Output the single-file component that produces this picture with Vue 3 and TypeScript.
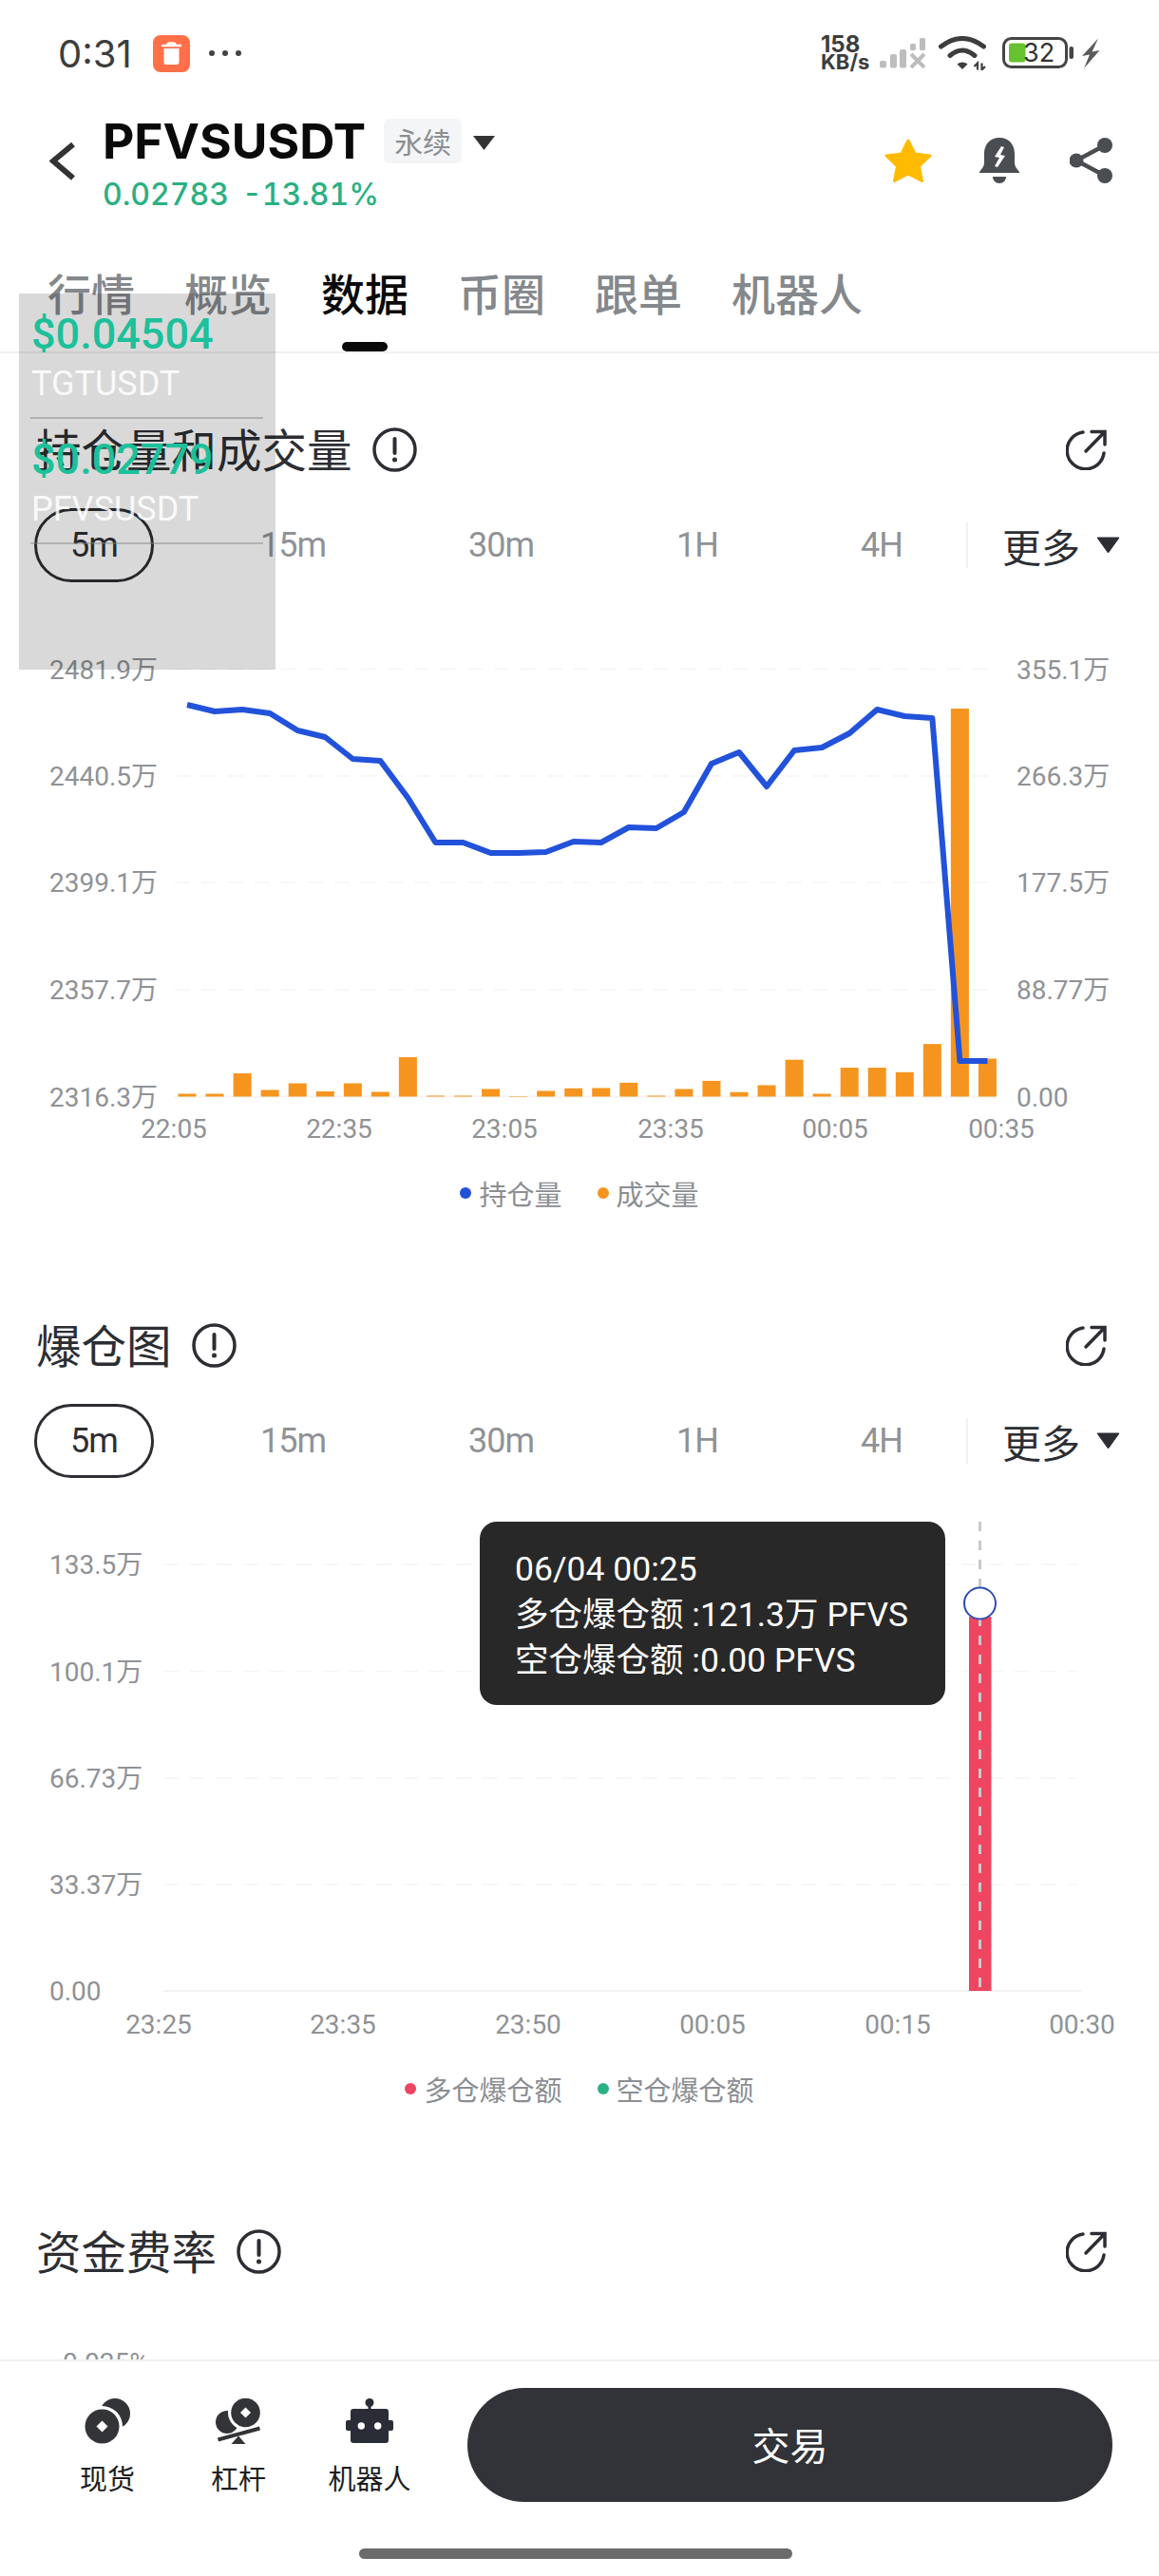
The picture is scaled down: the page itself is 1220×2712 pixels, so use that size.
<script setup lang="ts">
type Legend = { label: string; color: string };

const tabs = ['行情', '概览', '数据', '币圈', '跟单', '机器人'];
const ranges = ['5m', '15m', '30m', '1H', '4H'];
const tickers = [
    { price: '$0.04504', name: 'TGTUSDT' },
    { price: '$0.02779', name: 'PFVSUSDT' },
];

// chart 1: one value per 5 minute bucket, in svg pixels
const barHeights = [3, 3, 24.5, 7, 14, 5.5, 14, 5, 41.5, 1, 1, 8, 0.5, 6, 8.7, 9, 14.6, 1, 8, 16.6, 4.7, 12, 38.8, 3, 30.4, 30.4, 25.7, 55.4, 408.5, 40];
const oiLine = [129, 136, 134, 138, 156, 163, 186, 188, 227, 274, 274, 285, 285, 284, 273, 274, 258, 259, 242, 191, 179, 215, 177, 174, 159, 134, 141, 143, 504, 504];
const barX = (i: number) => 197 + i * 29.05;
const oiPoints = oiLine.map((y, i) => `${barX(i)},${y}`).join(' ');

const grid1 = [91.5, 204, 316, 429];
const base1 = 541.5;
const left1 = ['2481.9万', '2440.5万', '2399.1万', '2357.7万', '2316.3万'];
const right1 = ['355.1万', '266.3万', '177.5万', '88.77万', '0.00'];
const time1 = [
    { t: '22:05', x: 183 }, { t: '22:35', x: 357 }, { t: '23:05', x: 531 },
    { t: '23:35', x: 706 }, { t: '00:05', x: 879 }, { t: '00:35', x: 1054 },
];

const grid2 = [91, 203.5, 316, 428];
const base2 = 540;
const left2 = ['133.5万', '100.1万', '66.73万', '33.37万', '0.00'];
const time2 = [
    { t: '23:25', x: 167 }, { t: '23:35', x: 361 }, { t: '23:50', x: 556 },
    { t: '00:05', x: 750 }, { t: '00:15', x: 945 }, { t: '00:30', x: 1139 },
];

const legend1: Legend[] = [
    { label: '持仓量', color: '#2152d9' },
    { label: '成交量', color: '#f5951f' },
];
const legend2: Legend[] = [
    { label: '多仓爆仓额', color: '#ef4560' },
    { label: '空仓爆仓额', color: '#2bb083' },
];

const labelY = (i: number, grid: number[], base: number) => (i < grid.length ? grid[i] : base) + 10;
</script>

<template>
    <div class="page">
        <div class="status">
            <span class="time">0:31</span>
            <svg class="app" width="39" height="39" viewBox="0 0 39 39">
                <rect width="39" height="39" rx="8" fill="#ff7049" />
                <path d="M10 11h19M15.5 10.5q0-2 2-2h4q2 0 2 2" fill="none" stroke="#fff" stroke-width="2.4" stroke-linecap="round" />
                <path d="M11.5 14h16v14.5q0 2.500-2.500 2.500h-11q-2.500 0-2.500-2.500z" fill="#fff" />
            </svg>
            <span class="dots"><i></i><i></i><i></i></span>
            <div class="speed"><b>158</b><b class="unit">KB/s</b></div>
            <svg class="signal" width="49" height="32" viewBox="0 0 49 32" fill="#bdbdbd">
                <rect y="24" width="7" height="7.500" rx="2" />
                <rect x="11" y="17" width="7" height="14.500" rx="2" />
                <rect x="21" y="12" width="7" height="19.500" rx="2" />
                <rect x="32" y="6" width="6" height="7" rx="1.500" />
                <rect x="42" width="6" height="13" rx="1.500" />
                <path d="M33 17l14 14M47 17L33 31" stroke="#bdbdbd" stroke-width="4" />
            </svg>
            <svg class="wifi" width="50" height="36" viewBox="0 0 50 36" fill="none" stroke="#3d3d3d">
                <path d="M2.500 11Q25-6 47.500 11" stroke-width="5" stroke-linecap="round" />
                <path d="M12 20.500Q25 9.500 38 20.500" stroke-width="5" stroke-linecap="round" />
                <path d="M19.500 29.500Q25 25.500 30.500 29.500L25 35z" fill="#3d3d3d" stroke="none" />
                <path d="M41 35.500v-7l-3.500 3.500M45.500 28.500v7l3.500-3.500" stroke-width="2.200" />
            </svg>
            <svg class="battery" width="76" height="34" viewBox="0 0 76 34">
                <rect x="1.500" y="1.500" width="66" height="30" rx="8" fill="none" stroke="#454545" stroke-width="3" />
                <rect x="7" y="6.500" width="17.500" height="20" rx="3" fill="#66c22f" />
                <text x="22" y="26" class="batt-text">32</text>
                <rect x="70.500" y="10" width="4.500" height="13" rx="2" fill="#454545" />
            </svg>
            <svg class="bolt" width="20" height="32" viewBox="0 0 20 32">
                <path d="M18 0.500L1 19l8-1.500L3 32l16.500-19-8 1.500z" fill="#5b5b5b" />
            </svg>
        </div>

        <div class="header">
            <svg class="back" width="28" height="44" viewBox="0 0 28 44" fill="none">
                <path d="M25 4L4 21.500 25 39.500" stroke="#333" stroke-width="6" />
            </svg>
            <div class="head-info">
                <div class="head-title">
                    <span class="symbol">PFVSUSDT</span>
                    <span class="badge">永续</span>
                    <svg class="caret" width="23" height="15" viewBox="0 0 23 15"><path d="M0 0h23L11.500 15z" fill="#333" /></svg>
                </div>
                <div class="head-price"><span>0.02783</span><span>-13.81%</span></div>
            </div>
            <div class="head-actions">
                <svg width="50" height="48" viewBox="0 0 50 48">
                    <path d="M25 3l7 14 16 2-11.500 11 3 15.500L25 38l-14.500 7.500 3-15.500L2 19l16-2z" fill="#ffbb00" stroke="#ffbb00" stroke-width="3" stroke-linejoin="round" />
                </svg>
                <svg width="42" height="48" viewBox="0 0 42 48" fill="#4a4d52">
                    <path d="M21 0C10 0 5 8 5 17v9c0 5-3 7-5 10v1h42v-1c-2-3-5-5-5-10v-9C37 8 32 0 21 0z" />
                    <path d="M14 41h14c0 4-3 7-7 7s-7-3-7-7z" />
                    <path d="M23 9l-7 11 5 1-5 9 3 1 8-12-5-1 4-8z" fill="#fff" />
                </svg>
                <svg class="share" width="45" height="48" viewBox="0 0 45 48" fill="#4a4d52">
                    <path d="M37 8L7 24l30 16" fill="none" stroke="#4a4d52" stroke-width="4.500" />
                    <circle cx="37" cy="8" r="8" />
                    <circle cx="7" cy="24" r="7.500" />
                    <circle cx="37" cy="40" r="8" />
                </svg>
            </div>
        </div>

        <div class="tabs">
            <div v-for="(t, i) in tabs" :key="t" class="tab" :class="{ active: i === 2 }">{{ t }}</div>
        </div>

        <div class="content">
            <section class="block">
                <div class="block-head">
                    <h2>持仓量和成交量</h2>
                    <svg class="info" width="47" height="47" viewBox="0 0 47 47">
                        <circle cx="23.500" cy="23.500" r="21.500" fill="none" stroke="#2c2e33" stroke-width="3.500" />
                        <path d="M23.500 12v15" stroke="#2c2e33" stroke-width="4" stroke-linecap="round" />
                        <circle cx="23.500" cy="34" r="2.500" fill="#2c2e33" />
                    </svg>
                    <svg class="ext" width="44" height="44" viewBox="0 0 44 44" fill="none" stroke="#2c2e33" stroke-width="3.500" stroke-linecap="round">
                        <path d="M18 4A19.500 19.500 0 1 0 40 26" />
                        <path d="M21 24L40 4.500M27 3.500h14V17" />
                    </svg>
                </div>
                <div class="range-row">
                    <div class="ranges">
                        <span v-for="(r, i) in ranges" :key="r" class="range" :class="{ on: i === 0 }">{{ r }}</span>
                    </div>
                    <div class="range-more">
                        <span class="range-sep"></span>
                        <span class="more">更多</span>
                        <svg width="25" height="18" viewBox="0 0 25 18"><path d="M1 1h23L12.500 17z" fill="#2c2e33" stroke="#2c2e33" stroke-linejoin="round" /></svg>
                    </div>
                </div>
                <svg class="chart" width="1220" height="623" viewBox="0 0 1220 623">
                    <line v-for="y in grid1" :key="y" x1="184" x2="1049" :y1="y" :y2="y" class="grid" />
                    <line x1="184" x2="1049" :y1="base1" :y2="base1" class="base" />
                    <rect v-for="(h, i) in barHeights" :key="i" :x="barX(i) - 9.500" :y="base1 - h" width="19" :height="h" fill="#f5951f" />
                    <polyline :points="oiPoints" fill="none" stroke="#2152d9" stroke-width="6" stroke-linejoin="round" />
                    <text v-for="(l, i) in left1" :key="l" x="52" :y="labelY(i, grid1, base1)" class="axis">{{ l }}</text>
                    <text v-for="(l, i) in right1" :key="l" x="1070" :y="labelY(i, grid1, base1)" class="axis">{{ l }}</text>
                    <text v-for="a in time1" :key="a.t" :x="a.x" y="585" text-anchor="middle" class="axis">{{ a.t }}</text>
                </svg>
                <div class="legend">
                    <span v-for="l in legend1" :key="l.label" class="legend-item">
                        <i :style="{ background: l.color }"></i>{{ l.label }}
                    </span>
                </div>
            </section>

            <section class="block second">
                <div class="block-head">
                    <h2>爆仓图</h2>
                    <svg class="info" width="47" height="47" viewBox="0 0 47 47">
                        <circle cx="23.500" cy="23.500" r="21.500" fill="none" stroke="#2c2e33" stroke-width="3.500" />
                        <path d="M23.500 12v15" stroke="#2c2e33" stroke-width="4" stroke-linecap="round" />
                        <circle cx="23.500" cy="34" r="2.500" fill="#2c2e33" />
                    </svg>
                    <svg class="ext" width="44" height="44" viewBox="0 0 44 44" fill="none" stroke="#2c2e33" stroke-width="3.500" stroke-linecap="round">
                        <path d="M18 4A19.500 19.500 0 1 0 40 26" />
                        <path d="M21 24L40 4.500M27 3.500h14V17" />
                    </svg>
                </div>
                <div class="range-row">
                    <div class="ranges">
                        <span v-for="(r, i) in ranges" :key="r" class="range" :class="{ on: i === 0 }">{{ r }}</span>
                    </div>
                    <div class="range-more">
                        <span class="range-sep"></span>
                        <span class="more">更多</span>
                        <svg width="25" height="18" viewBox="0 0 25 18"><path d="M1 1h23L12.500 17z" fill="#2c2e33" stroke="#2c2e33" stroke-linejoin="round" /></svg>
                    </div>
                </div>
                <div class="chart-wrap">
                    <svg class="chart" width="1220" height="623" viewBox="0 0 1220 623">
                        <line v-for="y in grid2" :key="y" x1="172" x2="1134" :y1="y" :y2="y" class="grid" />
                        <line x1="172" x2="1138" :y1="base2" :y2="base2" class="base" />
                        <rect x="1020" y="146" width="23.500" :height="base2 - 146" fill="#ef4560" />
                        <line x1="1031.500" x2="1031.500" y1="46" :y2="base2" stroke="#c9c9c9" stroke-width="3" stroke-dasharray="10 10" />
                        <circle cx="1031.500" cy="132" r="16.500" fill="#fff" stroke="#2d4fb0" stroke-width="2" />
                        <text v-for="(l, i) in left2" :key="l" x="52" :y="labelY(i, grid2, base2)" class="axis">{{ l }}</text>
                        <text v-for="a in time2" :key="a.t" :x="a.x" y="585" text-anchor="middle" class="axis">{{ a.t }}</text>
                    </svg>
                    <div class="tooltip">
                        <div>06/04 00:25</div>
                        <div>多仓爆仓额 :121.3万 PFVS</div>
                        <div>空仓爆仓额 :0.00 PFVS</div>
                    </div>
                </div>
                <div class="legend">
                    <span v-for="l in legend2" :key="l.label" class="legend-item">
                        <i :style="{ background: l.color }"></i>{{ l.label }}
                    </span>
                </div>
            </section>

            <section class="block">
                <div class="block-head">
                    <h2>资金费率</h2>
                    <svg class="info" width="47" height="47" viewBox="0 0 47 47">
                        <circle cx="23.500" cy="23.500" r="21.500" fill="none" stroke="#2c2e33" stroke-width="3.500" />
                        <path d="M23.500 12v15" stroke="#2c2e33" stroke-width="4" stroke-linecap="round" />
                        <circle cx="23.500" cy="34" r="2.500" fill="#2c2e33" />
                    </svg>
                    <svg class="ext" width="44" height="44" viewBox="0 0 44 44" fill="none" stroke="#2c2e33" stroke-width="3.500" stroke-linecap="round">
                        <path d="M18 4A19.500 19.500 0 1 0 40 26" />
                        <path d="M21 24L40 4.500M27 3.500h14V17" />
                    </svg>
                </div>
                <div class="cut-label">0.025%</div>
            </section>
        </div>

        <div class="bottom">
            <div class="bottom-row">
                <div class="shortcut">
                    <svg width="48" height="48" viewBox="0 0 48 48">
                        <circle cx="32" cy="16" r="16" fill="#333438" />
                        <circle cx="18.500" cy="29.500" r="21.500" fill="#fff" />
                        <circle cx="18.500" cy="29.500" r="18" fill="#333438" />
                        <path d="M18.500 23.500l6 6-6 6-6-6z" fill="#fff" />
                    </svg>
                    <span>现货</span>
                </div>
                <div class="shortcut">
                    <svg width="48" height="48" viewBox="0 0 48 48">
                        <circle cx="12" cy="25" r="12" fill="#333438" />
                        <circle cx="31.500" cy="15" r="18.500" fill="#fff" />
                        <circle cx="31.500" cy="15" r="15.300" fill="#333438" />
                        <path d="M31.500 9.500l5.500 5.500-5.500 5.500L26 15z" fill="#fff" />
                        <path d="M2.500 43.500L46.500 31.500" stroke="#333438" stroke-width="4" />
                        <path d="M24 39.500l7.500 8.500h-15z" fill="#333438" />
                    </svg>
                    <span>杠杆</span>
                </div>
                <div class="shortcut">
                    <svg width="50" height="48" viewBox="0 0 50 48" fill="#2b2d36">
                        <circle cx="25" cy="4.500" r="4.500" />
                        <rect x="23.500" y="5" width="3" height="8" />
                        <rect x="5" y="11" width="40" height="36" rx="3" />
                        <rect y="23" width="50" height="11" rx="2" />
                        <circle cx="16.300" cy="29" r="3.700" fill="#fff" />
                        <circle cx="33.700" cy="29" r="3.700" fill="#fff" />
                    </svg>
                    <span>机器人</span>
                </div>
                <div class="trade">交易</div>
            </div>
            <div class="home"></div>
        </div>

        <!-- translucent floating ticker widget, sits over the page -->
        <div class="overlay">
            <div v-for="t in tickers" :key="t.name" class="ticker">
                <div class="ticker-price">{{ t.price }}</div>
                <div class="ticker-name">{{ t.name }}</div>
            </div>
        </div>
    </div>
</template>

<style>
html, body {
    margin: 0;
    background: #fff;
}
</style>

<style scoped>
.page {
    width: 1220px;
    height: 2712px;
    position: relative;
    overflow: hidden;
    display: flex;
    flex-direction: column;
    background: #fff;
    font-family: Roboto, "Noto Sans CJK SC", sans-serif;
    color: #2c2e33;
}

.status {
    height: 112px;
    flex: none;
    display: flex;
    align-items: center;
    padding-left: 61px;
}
.time {
    font-family: Inter, sans-serif;
    font-size: 40px;
    color: #3d3d3d;
    width: 100px;
}
.dots {
    display: flex;
    gap: 8px;
    margin-left: 20px;
}
.dots i {
    width: 6px;
    height: 6px;
    border-radius: 50%;
    background: #444;
}
.speed {
    margin-left: auto;
    display: flex;
    flex-direction: column;
    font-family: Inter, sans-serif;
    color: #3d3d3d;
    width: 62px;
}
.speed b {
    font-size: 24px;
    line-height: 19px;
    font-weight: 700;
}
.speed .unit {
    font-size: 22px;
}
.wifi {
    margin-left: 13px;
}
.battery {
    margin-left: 17px;
}
.batt-text {
    font-family: Inter, sans-serif;
    font-size: 27px;
    fill: #333;
}
.bolt {
    margin: 0 62px 0 7px;
}

.header {
    height: 138px;
    flex: none;
    display: flex;
    align-items: flex-start;
    padding: 10px 49px 0 52px;
    box-sizing: border-box;
}
.back {
    margin: 26px 28px 0 0;
}
.head-title {
    display: flex;
    align-items: center;
    height: 52px;
}
.symbol {
    font-family: Inter, sans-serif;
    font-weight: 700;
    font-size: 51.5px;
    line-height: 52px;
    color: #0a0a0a;
}
.badge {
    margin-left: 19px;
    width: 82px;
    height: 47px;
    line-height: 47px;
    text-align: center;
    background: #f4f5f6;
    border-radius: 6px;
    font-size: 30px;
    color: #8b8e93;
    font-family: "Noto Sans CJK SC", sans-serif;
}
.caret {
    margin: 4px 0 0 12px;
}
.head-price {
    margin-top: 11px;
    display: flex;
    gap: 14px;
    font-family: Inter, sans-serif;
    font-size: 32px;
    font-variant-numeric: tabular-nums;
    line-height: 40px;
    font-weight: 500;
    color: #2bb083;
}
.head-actions {
    margin: 23px 0 0 auto;
    display: flex;
    gap: 50px;
}
.share {
    margin-left: 3px;
}

.tabs {
    height: 122px;
    flex: none;
    box-sizing: border-box;
    display: flex;
    gap: 52px;
    padding: 27px 0 0 50px;
    border-bottom: 2px solid #f0f0f0;
}
.tab {
    position: relative;
    height: 93px;
    font-family: "Noto Sans CJK SC", sans-serif;
    font-size: 46px;
    line-height: 60px;
    font-weight: 500;
    color: #85888c;
}
.tab.active {
    color: #0a0a0a;
}
.tab.active::after {
    content: "";
    position: absolute;
    left: 50%;
    bottom: 0;
    width: 48px;
    height: 10px;
    margin-left: -24px;
    border-radius: 5px;
    background: #0a0a0a;
}

.content {
    flex: 1;
    min-height: 0;
    overflow: hidden;
}
.block {
    padding-top: 72px;
}
.block.second {
    margin-bottom: 11px;
}
.block-head {
    height: 58px;
    display: flex;
    align-items: center;
    padding: 0 54px 0 38px;
}
.block-head h2 {
    margin: 0 0 4px;
    font-family: "Noto Sans CJK SC", sans-serif;
    font-size: 47.5px;
    font-weight: 400;
}
.info {
    margin-left: 21px;
}
.ext {
    margin-left: auto;
}
.range-row {
    margin-top: 33px;
    height: 78px;
    display: flex;
    align-items: center;
    justify-content: space-between;
    padding: 0 41px 0 36px;
}
.ranges {
    display: flex;
    align-items: center;
    gap: 150px;
}
.range {
    font-size: 36px;
    letter-spacing: -1px;
    color: #8f9296;
}
.range.on {
    box-sizing: border-box;
    width: 126px;
    height: 78px;
    line-height: 72px;
    text-align: center;
    border: 3px solid #2c2e33;
    border-radius: 39px;
    color: #2c2e33;
    margin-right: -38px;
}
.range-more {
    display: flex;
    align-items: center;
}
.range-sep {
    width: 2px;
    height: 48px;
    background: #eff0f1;
    margin-right: 36px;
}
.more {
    font-family: "Noto Sans CJK SC", sans-serif;
    font-size: 41px;
    margin-right: 17px;
}
.chart {
    display: block;
}
.chart-wrap {
    position: relative;
}
.grid {
    stroke: #f5f5f5;
    stroke-width: 1.5;
    stroke-dasharray: 16 12;
}
.base {
    stroke: #f3f3f3;
    stroke-width: 2;
}
.axis {
    font-family: Roboto, "Noto Sans CJK SC", sans-serif;
    font-size: 28px;
    fill: #8f9296;
}
.tooltip {
    position: absolute;
    left: 505px;
    top: 46px;
    width: 490px;
    height: 193px;
    box-sizing: border-box;
    padding: 26px 0 0 37px;
    border-radius: 18px;
    background: #282828;
    color: #fff;
    font-size: 35.5px;
    line-height: 48px;
}
.legend {
    height: 40px;
    display: flex;
    justify-content: center;
    gap: 37px;
    padding-bottom: 39px;
}
.legend-item {
    display: flex;
    align-items: center;
    gap: 8px;
    font-family: "Noto Sans CJK SC", sans-serif;
    font-size: 29px;
    line-height: 40px;
    color: #8b8e93;
}
.legend-item i {
    width: 12px;
    height: 12px;
    border-radius: 50%;
}
.cut-label {
    margin-top: 75px;
    padding-left: 66px;
    font-size: 28px;
    line-height: 28px;
    color: #8f9296;
}

.bottom {
    height: 228px;
    flex: none;
    box-sizing: border-box;
    border-top: 2px solid #f0f0f0;
    background: #fff;
    position: relative;
    padding-top: 28px;
}
.bottom-row {
    display: flex;
    height: 120px;
    padding: 0 49px 0 44px;
}
.shortcut {
    width: 138px;
    padding-top: 11px;
    display: flex;
    flex-direction: column;
    align-items: center;
    font-family: "Noto Sans CJK SC", sans-serif;
    font-size: 29px;
    color: #1e1e1e;
}
.shortcut span {
    margin-top: 15px;
    line-height: 40px;
}
.trade {
    flex: 1;
    margin-left: 34px;
    border-radius: 60px;
    background: #313338;
    color: #fff;
    font-family: "Noto Sans CJK SC", sans-serif;
    font-size: 40px;
    line-height: 118px;
    text-align: center;
}
.home {
    margin: 49px 0 0 378px;
    width: 456px;
    height: 11px;
    border-radius: 6px;
    background: #6b6b6b;
}

.overlay {
    position: absolute;
    left: 20px;
    top: 309px;
    width: 270px;
    height: 396px;
    background: rgba(0, 0, 0, 0.15);
}
.ticker {
    height: 132px;
    box-sizing: border-box;
    margin: 0 13px 0 12px;
    padding: 18px 0 0 1px;
    border-bottom: 2px solid rgba(128, 128, 128, 0.45);
}
.ticker-price {
    font-size: 45px;
    font-weight: 500;
    line-height: 50px;
    color: #1cc09b;
}
.ticker-name {
    margin-top: 7px;
    font-size: 36px;
    line-height: 40px;
    color: rgba(255, 255, 255, 0.85);
}
</style>
